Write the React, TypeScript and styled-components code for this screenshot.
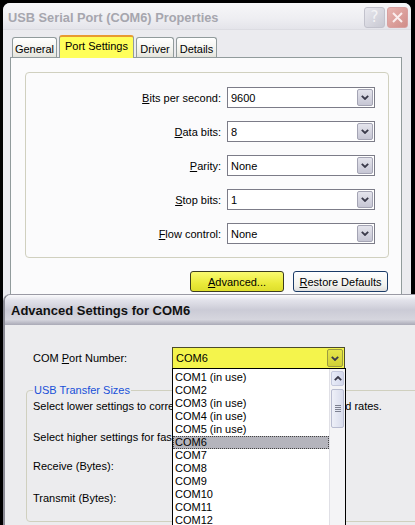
import React from "react";
import styled, { createGlobalStyle, css } from "styled-components";

const Global = createGlobalStyle`
  html, body { margin: 0; padding: 0; background: #000; }
  body {
    width: 415px; height: 525px; overflow: hidden;
    font-family: "Liberation Sans", Arial, sans-serif;
    font-size: 11px; color: #000;
  }
  #root { width: 415px; height: 525px; }
  * { box-sizing: border-box; }
`;

const Desktop = styled.div`
  position: relative;
  width: 415px;
  height: 525px;
  padding: 3px 4px 0 3px;
  background: #000;
  overflow: hidden;
`;

const Window = styled.div`
  width: 408px;
  height: 560px;
  background: #ebebef;
  display: flex;
  flex-direction: column;
  border-radius: 7px 7px 0 0;
`;

const TitleBar = styled.div`
  height: 27px;
  flex: none;
  display: flex;
  align-items: center;
  justify-content: space-between;
  padding: 0 3px 0 5px;
  border-radius: 7px 7px 0 0;
  background: linear-gradient(#f6f6f8 0%, #eeeef2 60%, #e4e4ea 100%);
  border-bottom: 1px solid #dcdce2;
`;

const TitleText = styled.span`
  font-family: "Liberation Sans", Arial, sans-serif;
  font-weight: bold;
  font-size: 12.8px;
  color: #a6a6ae;
  padding-top: 2px;
`;

const TitleButtons = styled.div`
  display: flex;
  gap: 2px;
  padding-top: 2px;
`;

const CapButton = styled.div<{ $kind: "help" | "close" }>`
  width: 21px;
  height: 21px;
  border-radius: 3px;
  display: flex;
  align-items: center;
  justify-content: center;
  border: 1px solid ${(p) => (p.$kind === "help" ? "#c2c2cc" : "#d8a0a0")};
  background: ${(p) =>
    p.$kind === "help"
      ? "linear-gradient(135deg, #e8e8ee, #c8c8d2)"
      : "linear-gradient(135deg, #e8b4b0, #d08c88)"};
  color: #f4f4f6;
  font-size: 15px;
  font-family: "DejaVu Sans", sans-serif;
`;

const Body = styled.div`
  flex: 1;
  display: flex;
  flex-direction: column;
  padding: 5px 9px 0 7px;
`;

const TabRow = styled.div`
  display: flex;
  align-items: flex-end;
  height: 22px;
  padding-left: 2px;
  gap: 2px;
  position: relative;
  z-index: 1;
`;

const Tab = styled.div<{ $active?: boolean; $w: number }>`
  width: ${(p) => p.$w}px;
  height: 20px;
  border: 1px solid #919b9c;
  border-bottom: none;
  border-radius: 3px 3px 0 0;
  background: linear-gradient(#ffffff, #f0f0ea 70%, #e4e4dc);
  display: flex;
  align-items: center;
  justify-content: center;
  font-size: 11px;
  padding-top: 2px;
  ${(p) =>
    p.$active &&
    css`
      height: 23px;
      margin-bottom: -1px;
      background: #ffff5a;
      border-top: 2px solid #e89a30;
      padding-top: 0;
      padding-bottom: 3px;
    `}
`;

const Panel = styled.div`
  flex: 1;
  border: 1px solid #919b9c;
  background: #fbfbfc;
  padding: 14px 12px 0 14px;
`;

const Group = styled.div`
  border: 1px solid #d0d0bf;
  border-radius: 4px;
  padding: 14px 13px 13px;
  display: flex;
  flex-direction: column;
  gap: 13px;
`;

const FieldRow = styled.div`
  display: flex;
  justify-content: flex-end;
  align-items: center;
  gap: 6px;
`;

const Label = styled.span`
  font-size: 11px;
  white-space: nowrap;
`;

const U = styled.span`
  text-decoration: underline;
`;

const Combo = styled.div<{ $w: number; $h: number; $yellow?: boolean }>`
  position: relative;
  width: ${(p) => p.$w}px;
  height: ${(p) => p.$h}px;
  border: 1px solid ${(p) => (p.$yellow ? "#4b4b2a" : "#7c7c88")};
  background: ${(p) => (p.$yellow ? "#f4f44c" : "#ffffff")};
  display: flex;
  align-items: center;
  padding-left: 3px;
`;

const ComboValue = styled.span`
  flex: 1;
  font-size: 11px;
  white-space: nowrap;
`;

const ArrowBtn = styled.div<{ $yellow?: boolean }>`
  width: 16px;
  align-self: stretch;
  margin: 1px;
  border: 1px solid ${(p) => (p.$yellow ? "#9a9a40" : "#a4a4b4")};
  border-radius: 2px;
  background: ${(p) =>
    p.$yellow
      ? "linear-gradient(#e6e64a, #d0d036)"
      : "linear-gradient(#e4e4ec, #c6c6d4)"};
  display: flex;
  align-items: center;
  justify-content: center;
`;

const Chevron = ({ up }: { up?: boolean }) => (
  <svg width="8" height="5" viewBox="0 0 8 5">
    <path
      d={up ? "M0.8 4.2 L4 1 L7.2 4.2" : "M0.8 0.8 L4 4 L7.2 0.8"}
      fill="none"
      stroke="#3a3a4a"
      strokeWidth="1.8"
    />
  </svg>
);

const ButtonRow = styled.div`
  display: flex;
  justify-content: flex-end;
  gap: 9px;
  margin-top: 13px;
  padding-right: 1px;
`;

const PushButton = styled.div<{ $w: number; $yellow?: boolean }>`
  width: ${(p) => p.$w}px;
  height: 21px;
  border-radius: 3px;
  border: 1px solid ${(p) => (p.$yellow ? "#3c3c20" : "#1c3c68")};
  background: ${(p) =>
    p.$yellow
      ? "linear-gradient(#fafa70, #eaea3a 60%, #dede2c)"
      : "linear-gradient(#ffffff, #f2f2ee 70%, #dedede)"};
  display: flex;
  align-items: center;
  justify-content: center;
  font-size: 11px;
`;

/* ---------- Advanced window ---------- */

const AdvWindow = styled.div`
  position: absolute;
  left: 3px;
  top: 294px;
  width: 420px;
  height: 240px;
  background: #ececee;
  border-left: 2px solid #8a8a94;
  border-top: 1px solid #9a9aa4;
  border-radius: 7px 0 0 0;
  display: flex;
  flex-direction: column;
`;

const AdvTitle = styled.div`
  height: 30px;
  flex: none;
  display: flex;
  align-items: center;
  padding-left: 6px;
  border-radius: 6px 0 0 0;
  background: linear-gradient(
    #fbfbfd 0%,
    #e2e2ea 18%,
    #cbcbd6 50%,
    #d6d6de 82%,
    #a9a9b6 100%
  );
  font-weight: bold;
  font-size: 13px;
  color: #111;
`;

const AdvBody = styled.div`
  flex: 1;
  padding: 22px 0 0 21px;
  display: flex;
  flex-direction: column;
`;

const ComRow = styled.div`
  display: flex;
  align-items: center;
  position: relative;
  z-index: 2;
`;

const ComLabel = styled.span`
  width: 146px;
  padding-left: 7px;
  font-size: 11px;
`;

const DropList = styled.div`
  position: absolute;
  top: 100%;
  left: -1px;
  width: 174px;
  height: 170px;
  background: #fff;
  border: 1px solid #000;
  padding-top: 2px;
`;

const Item = styled.div<{ $sel?: boolean }>`
  height: 13px;
  line-height: 13px;
  padding-left: 2px;
  margin-right: 16px;
  font-size: 11px;
  white-space: nowrap;
  ${(p) =>
    p.$sel &&
    css`
      background: #b4b4bc;
      outline: 1px dotted #444;
      outline-offset: -1px;
    `}
`;

const ScrollBar = styled.div`
  position: absolute;
  right: 0;
  top: 0;
  bottom: 0;
  width: 16px;
  background: #f4f4f6;
  border-left: 1px solid #e0e0e6;
  padding-top: 2px;
  display: flex;
  flex-direction: column;
  gap: 3px;
`;

const ScrollBtn = styled.div`
  height: 15px;
  margin: 0 1px;
  border: 1px solid #c4c8dc;
  border-radius: 2px;
  background: linear-gradient(90deg, #e8ecf8, #d4d8ec);
  display: flex;
  align-items: center;
  justify-content: center;
`;

const Thumb = styled.div`
  height: 39px;
  margin: 0 1px;
  border: 1px solid #b8bcd0;
  border-radius: 2px;
  background: linear-gradient(90deg, #eef0f8, #d8dcec);
  display: flex;
  align-items: center;
  justify-content: center;
`;

const Grip = styled.div`
  width: 6px;
  height: 7px;
  background: repeating-linear-gradient(#7c8090 0 1px, transparent 1px 2px);
`;

const Fieldset = styled.fieldset`
  margin: 15px 0 0 0;
  padding: 0 0 0 6px;
  border: 1px solid #d0d0bf;
  border-radius: 4px;
  height: 138px;
  width: 420px;
`;

const Legend = styled.legend`
  color: #1850d8;
  font-size: 11px;
  padding: 0 1px;
  margin-left: 0;
`;

const GroupText = styled.div<{ $top: number }>`
  margin-top: ${(p) => p.$top}px;
  font-size: 11px;
  white-space: nowrap;
  line-height: 13px;
  display: flex;
`;

/* part of a sentence that lies under the open drop-down list */
const Covered = styled.span<{ $w: number }>`
  display: inline-block;
  width: ${(p) => p.$w}px;
  overflow: hidden;
  visibility: hidden;
`;

const items = [
  "COM1 (in use)",
  "COM2",
  "COM3 (in use)",
  "COM4 (in use)",
  "COM5 (in use)",
  "COM6",
  "COM7",
  "COM8",
  "COM9",
  "COM10",
  "COM11",
  "COM12",
];

const fields: { label: React.ReactNode; value: string }[] = [
  { label: <><U>B</U>its per second:</>, value: "9600" },
  { label: <><U>D</U>ata bits:</>, value: "8" },
  { label: <><U>P</U>arity:</>, value: "None" },
  { label: <><U>S</U>top bits:</>, value: "1" },
  { label: <><U>F</U>low control:</>, value: "None" },
];

export default function App() {
  return (
    <>
      <Global />
      <Desktop>
        <Window>
          <TitleBar>
            <TitleText>USB Serial Port (COM6) Properties</TitleText>
            <TitleButtons>
              <CapButton $kind="help">?</CapButton>
              <CapButton $kind="close">
                <svg width="11" height="11" viewBox="0 0 11 11">
                  <path d="M1 1 L10 10 M10 1 L1 10" stroke="#fbeeee" strokeWidth="2" />
                </svg>
              </CapButton>
            </TitleButtons>
          </TitleBar>
          <Body>
            <TabRow>
              <Tab $w={45}>General</Tab>
              <Tab $w={75} $active>Port Settings</Tab>
              <Tab $w={38}>Driver</Tab>
              <Tab $w={41}>Details</Tab>
            </TabRow>
            <Panel>
              <Group>
                {fields.map((f, i) => (
                  <FieldRow key={i}>
                    <Label>{f.label}</Label>
                    <Combo $w={148} $h={21}>
                      <ComboValue>{f.value}</ComboValue>
                      <ArrowBtn>
                        <Chevron />
                      </ArrowBtn>
                    </Combo>
                  </FieldRow>
                ))}
              </Group>
              <ButtonRow>
                <PushButton $w={94} $yellow>
                  <span><U>A</U>dvanced...</span>
                </PushButton>
                <PushButton $w={95}>
                  <span><U>R</U>estore Defaults</span>
                </PushButton>
              </ButtonRow>
            </Panel>
          </Body>
        </Window>

        <AdvWindow>
          <AdvTitle>Advanced Settings for COM6</AdvTitle>
          <AdvBody>
            <ComRow>
              <ComLabel>
                COM <U>P</U>ort Number:
              </ComLabel>
              <Combo $w={173} $h={22} $yellow>
                <ComboValue>COM6</ComboValue>
                <ArrowBtn $yellow>
                  <Chevron />
                </ArrowBtn>
                <DropList>
                  {items.map((it) => (
                    <Item key={it} $sel={it === "COM6"}>
                      {it}
                    </Item>
                  ))}
                  <ScrollBar>
                    <ScrollBtn>
                      <Chevron up />
                    </ScrollBtn>
                    <Thumb>
                      <Grip />
                    </Thumb>
                  </ScrollBar>
                </DropList>
              </Combo>
            </ComRow>
            <Fieldset>
              <Legend>USB Transfer Sizes</Legend>
              <GroupText $top={4}>
                <span>Select lower settings to corre</span>
                <Covered $w={171}>ct performance problems at low bau</Covered>
                <span>d rates.</span>
              </GroupText>
              <GroupText $top={18}>
                <span>Select higher settings for fas</span>
                <Covered $w={60}>ter performance.</Covered>
              </GroupText>
              <GroupText $top={16}>Receive (Bytes):</GroupText>
              <GroupText $top={19}>Transmit (Bytes):</GroupText>
            </Fieldset>
          </AdvBody>
        </AdvWindow>
      </Desktop>
    </>
  );
}
